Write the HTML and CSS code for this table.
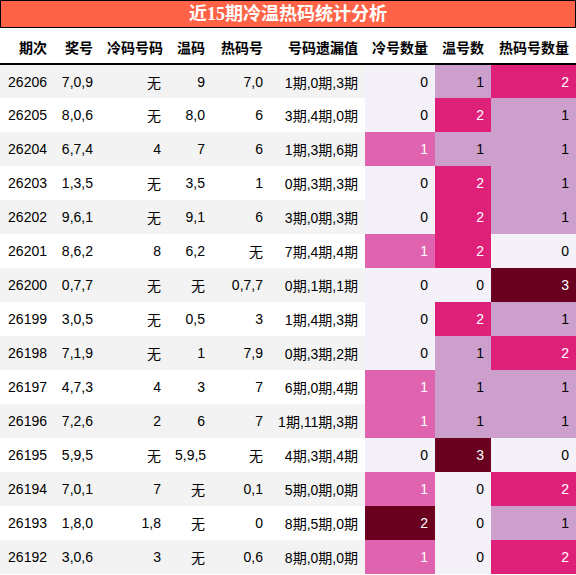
FILE: index.html
```html
<!DOCTYPE html>
<html lang="zh">
<head>
    <meta charset="UTF-8">
    <meta name="viewport" content="width=device-width, initial-scale=1.0">
    <title>冷温热码统计</title>
    <link rel="stylesheet" href="styles.css">
</head>
<body>
    <div class="title">近15期冷温热码统计分析</div>

    <table class="stats">
        <colgroup>
            <col class="w-qi">
            <col class="w-jiang">
            <col class="w-leng">
            <col class="w-wen">
            <col class="w-re">
            <col class="w-yilou">
            <col class="w-n1">
            <col class="w-n2">
            <col class="w-n3">
        </colgroup>
        <thead>
            <tr>
                <th>期次</th>
                <th>奖号</th>
                <th>冷码号码</th>
                <th>温码</th>
                <th>热码号</th>
                <th>号码遗漏值</th>
                <th>冷号数量</th>
                <th>温号数</th>
                <th>热码号数量</th>
            </tr>
        </thead>
        <tbody>
            <tr><td>26206</td><td>7,0,9</td><td>无</td><td>9</td><td>7,0</td><td>1期,0期,3期</td><td class="lv0">0</td><td class="lv1">1</td><td class="lv2">2</td></tr>
            <tr><td>26205</td><td>8,0,6</td><td>无</td><td>8,0</td><td>6</td><td>3期,4期,0期</td><td class="lv0">0</td><td class="lv2">2</td><td class="lv1">1</td></tr>
            <tr><td>26204</td><td>6,7,4</td><td>4</td><td>7</td><td>6</td><td>1期,3期,6期</td><td class="mid">1</td><td class="lv1">1</td><td class="lv1">1</td></tr>
            <tr><td>26203</td><td>1,3,5</td><td>无</td><td>3,5</td><td>1</td><td>0期,3期,3期</td><td class="lv0">0</td><td class="lv2">2</td><td class="lv1">1</td></tr>
            <tr><td>26202</td><td>9,6,1</td><td>无</td><td>9,1</td><td>6</td><td>3期,0期,3期</td><td class="lv0">0</td><td class="lv2">2</td><td class="lv1">1</td></tr>
            <tr><td>26201</td><td>8,6,2</td><td>8</td><td>6,2</td><td>无</td><td>7期,4期,4期</td><td class="mid">1</td><td class="lv2">2</td><td class="lv0">0</td></tr>
            <tr><td>26200</td><td>0,7,7</td><td>无</td><td>无</td><td>0,7,7</td><td>0期,1期,1期</td><td class="lv0">0</td><td class="lv0">0</td><td class="top">3</td></tr>
            <tr><td>26199</td><td>3,0,5</td><td>无</td><td>0,5</td><td>3</td><td>1期,4期,3期</td><td class="lv0">0</td><td class="lv2">2</td><td class="lv1">1</td></tr>
            <tr><td>26198</td><td>7,1,9</td><td>无</td><td>1</td><td>7,9</td><td>0期,3期,2期</td><td class="lv0">0</td><td class="lv1">1</td><td class="lv2">2</td></tr>
            <tr><td>26197</td><td>4,7,3</td><td>4</td><td>3</td><td>7</td><td>6期,0期,4期</td><td class="mid">1</td><td class="lv1">1</td><td class="lv1">1</td></tr>
            <tr><td>26196</td><td>7,2,6</td><td>2</td><td>6</td><td>7</td><td>1期,11期,3期</td><td class="mid">1</td><td class="lv1">1</td><td class="lv1">1</td></tr>
            <tr><td>26195</td><td>5,9,5</td><td>无</td><td>5,9,5</td><td>无</td><td>4期,3期,4期</td><td class="lv0">0</td><td class="top">3</td><td class="lv0">0</td></tr>
            <tr><td>26194</td><td>7,0,1</td><td>7</td><td>无</td><td>0,1</td><td>5期,0期,0期</td><td class="mid">1</td><td class="lv0">0</td><td class="lv2">2</td></tr>
            <tr><td>26193</td><td>1,8,0</td><td>1,8</td><td>无</td><td>0</td><td>8期,5期,0期</td><td class="top">2</td><td class="lv0">0</td><td class="lv1">1</td></tr>
            <tr><td>26192</td><td>3,0,6</td><td>3</td><td>无</td><td>0,6</td><td>8期,0期,0期</td><td class="mid">1</td><td class="lv0">0</td><td class="lv2">2</td></tr>
        </tbody>
    </table>
</body>
</html>
```

FILE: styles.css
```css
/* page base */
body {
    margin: 0;
    background: #fff;
    color: #000;
    font-family: "Liberation Sans", "Noto Sans CJK SC", sans-serif;
    font-size: 14px;
}

/* red banner on top */
.title {
    height: 26px;
    line-height: 26px;
    border: 1px solid #000;
    background: #ff6347;
    color: #fff;
    text-align: center;
    font-family: "Liberation Serif", "Noto Sans CJK SC", serif;
    font-size: 18px;
    font-weight: bold;
}

.stats {
    width: 576px;
    table-layout: fixed;
    border-collapse: collapse;
}

.w-qi { width: 54px; }
.w-jiang { width: 46px; }
.w-leng { width: 68px; }
.w-wen { width: 44px; }
.w-re { width: 58px; }
.w-yilou { width: 95px; }
.w-n1 { width: 70px; }
.w-n2 { width: 56px; }
.w-n3 { width: 85px; }

.stats th,
.stats td {
    padding: 0 7px;
    text-align: right;
    white-space: nowrap;
}

.stats thead tr {
    height: 36px;
    border-bottom: 2px solid #000;
}

.stats th {
    padding-top: 2px;
    font-weight: bold;
}

.stats tbody tr {
    height: 34px;
}

/* zebra rows */
.stats tbody tr:nth-child(odd) {
    background: #f3f3f3;
}

/* count cells, coloured by value */
.lv0 { background: #f4f2f8; color: #000; }
.lv1 { background: #cd9fcd; color: #000; }
.mid { background: #df63ae; color: #fff; }
.lv2 { background: #df2079; color: #fff; }
.top { background: #690020; color: #fff; }
```
